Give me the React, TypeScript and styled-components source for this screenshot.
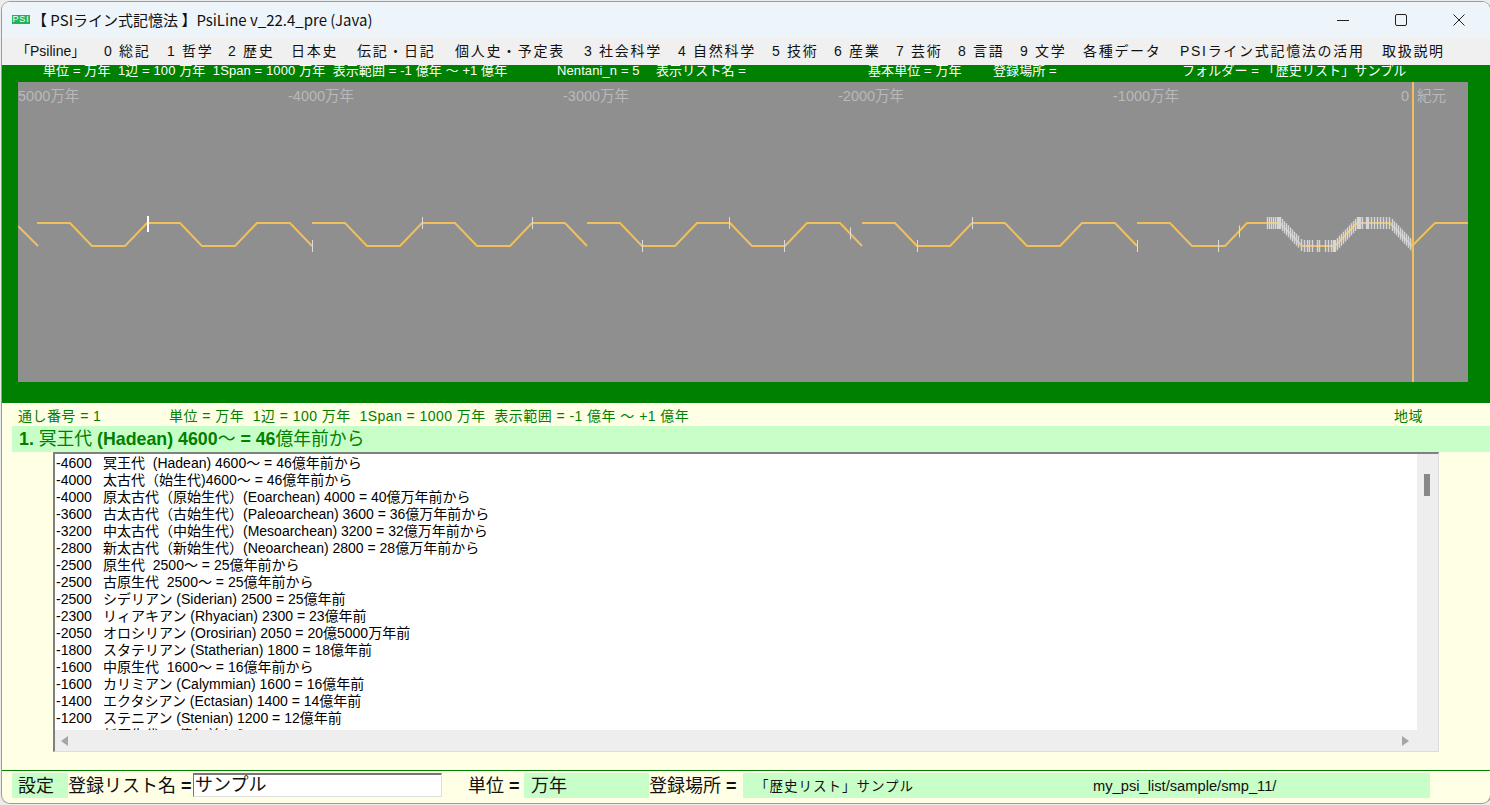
import React from "react";
import styled, { createGlobalStyle } from "styled-components";

const UI_FONT = `"Liberation Sans", "Noto Sans CJK JP", sans-serif`;
const GREEN = "#008000";
const PALE = "#c8ffc8";
const CREAM = "#ffffe6";
const ORANGE = "#f0c05c";

const GlobalStyle = createGlobalStyle`
  html, body {
    margin: 0;
    height: 100%;
    overflow: hidden;
    background: #ececec;
  }
  * { box-sizing: border-box; }
`;

const Page = styled.div`
  width: 1490px;
  height: 805px;
  padding: 2px 0 2px 2px;
  font-family: ${UI_FONT};
`;

const Window = styled.div`
  height: 801px;
  display: flex;
  flex-direction: column;
  overflow: hidden;
  background: ${CREAM};
  border-radius: 8px;
  box-shadow: 0 0 0 1px #9c9c9c;
`;

const TitleBar = styled.div`
  height: 36px;
  flex: none;
  display: flex;
  align-items: center;
  padding: 0 2px 0 10px;
  background: #eef5fa;
`;

const AppIcon = styled.span`
  width: 18px;
  height: 9px;
  margin: 0 2px 2px 0;
  background: #1fb35a;
  color: #fff;
  font-size: 9px;
  letter-spacing: 0.8px;
  line-height: 9px;
  text-align: center;
  overflow: hidden;
`;

const Title = styled.div`
  flex: 1;
  margin-bottom: 2px;
  font-family: "Noto Sans CJK JP", sans-serif;
  font-size: 15px;
  color: #111;
  white-space: pre;
`;

const WindowButtons = styled.div`
  display: flex;
`;

const WindowButton = styled.div`
  width: 58px;
  height: 36px;
  display: flex;
  align-items: center;
  justify-content: center;
  svg {
    display: block;
  }
`;

const MenuBar = styled.div`
  height: 27px;
  flex: none;
  display: flex;
  align-items: center;
  padding: 0 0 3px 14px;
  background: #f0f0f0;
`;

const MenuItem = styled.div<{ $w: number; $latin?: boolean }>`
  width: ${(p) => p.$w}px;
  flex: none;
  font-size: 14px;
  letter-spacing: ${(p) => (p.$latin ? 0 : 1.7)}px;
  color: #111;
  white-space: nowrap;
`;

const GreenPanel = styled.div`
  height: 338px;
  flex: none;
  background: ${GREEN};
  padding: 0 22px 21px 16px;
  display: flex;
  flex-direction: column;
`;

const StatusRow = styled.div`
  height: 17px;
  flex: none;
  display: grid;
  grid-template-columns: 514px 99px 212px 125px 189px 1fr;
  padding-left: 25px;
  overflow: hidden;
  color: #fff;
  font-size: 13px;
  letter-spacing: 0.1px;
  line-height: 12px;
  white-space: pre;
`;

const ChartSvg = styled.svg`
  display: block;
  width: 1450px;
  height: 300px;
  background: #8f8f8f;
`;

const AxisText = styled.text`
  fill: #b9b9b9;
  font-family: ${UI_FONT};
  font-size: 14.5px;
`;

const InfoRow = styled.div`
  height: 23px;
  flex: none;
  display: grid;
  grid-template-columns: 151px 1225px 1fr;
  align-items: center;
  padding: 0 0 0 16px;
  color: ${GREEN};
  font-size: 14px;
  letter-spacing: 0.45px;
  white-space: pre;
`;

const Heading = styled.div`
  height: 26px;
  flex: none;
  margin-left: 10px;
  padding-left: 7px;
  background: ${PALE};
  color: ${GREEN};
  font-size: 17.8px;
  line-height: 26px;
  white-space: pre;
  b {
    font-weight: 700;
  }
`;

const ListBox = styled.div`
  width: 1386px;
  height: 300px;
  flex: none;
  margin-left: 51px;
  display: grid;
  grid-template-columns: 1fr 21px;
  grid-template-rows: 1fr 21px;
  border-top: 2px solid #808080;
  border-left: 2px solid #808080;
  border-right: 1px solid #dcdcdc;
  border-bottom: 1px solid #dcdcdc;
  background: #fff;
`;

const ListRows = styled.div`
  overflow: hidden;
  padding: 1px 0 0 1px;
`;

const ListRow = styled.div`
  height: 17px;
  display: flex;
  font-size: 14px;
  line-height: 17px;
  color: #000;
  white-space: pre;
`;

const Year = styled.span`
  width: 47px;
  flex: none;
`;

const VScroll = styled.div`
  background: #eeeeee;
  padding: 20px 0 0 7px;
`;

const Thumb = styled.div`
  width: 6px;
  height: 22px;
  background: #888;
`;

const HScroll = styled.div`
  grid-column: 1 / 3;
  background: #eeeeee;
  display: flex;
  align-items: center;
  justify-content: space-between;
  padding: 0 29px 0 6px;
`;

const Arrow = styled.span<{ $right?: boolean }>`
  width: 0;
  height: 0;
  border-top: 5px solid transparent;
  border-bottom: 5px solid transparent;
  ${(p) =>
    p.$right
      ? "border-left: 7px solid #a5a5a5;"
      : "border-right: 7px solid #a5a5a5;"}
`;

const FootRow = styled.div`
  margin-top: 18px;
  height: 31px;
  flex: none;
  border-top: 1px solid ${GREEN};
  padding: 2px 0 0 10px;
  display: flex;
  font-size: 18px;
  line-height: 27px;
  color: #111;
  white-space: pre;
`;

const FootLabel = styled.div<{ $w: number; $pad?: number }>`
  width: ${(p) => p.$w}px;
  height: 25px;
  flex: none;
  padding-left: ${(p) => p.$pad ?? 0}px;
`;

const FootValue = styled(FootLabel)`
  background: ${PALE};
`;

const Eq = styled.b`
  font-weight: 700;
`;

const NameInput = styled.div`
  width: 249px;
  height: 24px;
  flex: none;
  padding-left: 1px;
  background: #fff;
  line-height: 20px;
  border-top: 2px solid #777;
  border-left: 1px solid #777;
  border-right: 1px solid #ddd;
  border-bottom: 1px solid #ddd;
`;

const PlaceBox = styled.div`
  width: 687px;
  height: 25px;
  flex: none;
  display: grid;
  grid-template-columns: 338px 1fr;
  padding-left: 12px;
  background: ${PALE};
  font-size: 14.7px;
  line-height: 27px;
`;

const PlaceName = styled.span`
  font-size: 13.5px;
  letter-spacing: 1px;
`;

const MENU: [string, number][] = [
  ["「Psiline」", 88],
  ["0 総記", 63],
  ["1 哲学", 61],
  ["2 歴史", 63],
  ["日本史", 66],
  ["伝記・日記", 98],
  ["個人史・予定表", 129],
  ["3 社会科学", 94],
  ["4 自然科学", 94],
  ["5 技術", 62],
  ["6 産業", 62],
  ["7 芸術", 62],
  ["8 言語", 62],
  ["9 文学", 63],
  ["各種データ", 97],
  ["PSIライン式記憶法の活用", 202],
  ["取扱説明", 80],
];

const ROWS: [string, string][] = [
  ["-4600", "冥王代  (Hadean) 4600～ = 46億年前から"],
  ["-4000", "太古代（始生代)4600～ = 46億年前から"],
  ["-4000", "原太古代（原始生代）(Eoarchean) 4000 = 40億万年前から"],
  ["-3600", "古太古代（古始生代）(Paleoarchean) 3600 = 36億万年前から"],
  ["-3200", "中太古代（中始生代）(Mesoarchean) 3200 = 32億万年前から"],
  ["-2800", "新太古代（新始生代）(Neoarchean) 2800 = 28億万年前から"],
  ["-2500", "原生代  2500～ = 25億年前から"],
  ["-2500", "古原生代  2500～ = 25億年前から"],
  ["-2500", "シデリアン (Siderian) 2500 = 25億年前"],
  ["-2300", "リィアキアン (Rhyacian) 2300 = 23億年前"],
  ["-2050", "オロシリアン (Orosirian) 2050 = 20億5000万年前"],
  ["-1800", "スタテリアン (Statherian) 1800 = 18億年前"],
  ["-1600", "中原生代  1600～ = 16億年前から"],
  ["-1600", "カリミアン (Calymmian) 1600 = 16億年前"],
  ["-1400", "エクタシアン (Ectasian) 1400 = 14億年前"],
  ["-1200", "ステニアン (Stenian) 1200 = 12億年前"],
  ["-1000", "新原生代 10億年前から"],
];

const HIGH = 223;
const LOW = 246;

const waveY = (x: number) => {
  const s = 37 + 275 * Math.floor((x - 37.01) / 275);
  const p = (x - s) % 110;
  if (p < 33) return HIGH;
  if (p < 55) return HIGH + ((p - 33) / 22) * (LOW - HIGH);
  if (p < 88) return LOW;
  return LOW - ((p - 88) / 22) * (LOW - HIGH);
};

const segment = (s: number) =>
  `M${s} ${HIGH}H${s + 33}L${s + 55} ${LOW}H${s + 88}L${s + 110} ${HIGH}H${s + 143}L${s + 165} ${LOW}H${s + 198}L${s + 220} ${HIGH}H${s + 253}L${s + 275} ${LOW}`;

const WAVE =
  `M18 226L38 ${LOW}` +
  [37, 312, 587, 862, 1137].map(segment).join("") +
  `M1412 ${LOW}L1435 ${HIGH}H1468`;

const SPARSE = [312, 422, 532, 642, 729, 784, 850, 917, 972, 1137, 1218, 1239];

const range = (from: number, to: number, step: number) => {
  const out: number[] = [];
  for (let x = from; x <= to; x += step) out.push(x);
  return out;
};

const DENSE = [
  1267, 1269, 1271, 1273, 1275, 1277, 1278, 1279, 1280,
  ...range(1282, 1299, 2),
  1301, 1304, 1307, 1309, 1312, 1317, 1319, 1325, 1328, 1331, 1333, 1334, 1335,
  ...range(1337, 1355, 2),
  1357, 1358, 1359, 1360, 1362, 1366, 1367, 1368, 1371, 1374, 1377, 1380, 1383, 1386, 1389,
  ...range(1392, 1412, 2),
];

const AXIS: [string, number][] = [
  ["5000万年", 18],
  ["-4000万年", 288],
  ["-3000万年", 563],
  ["-2000万年", 838],
  ["-1000万年", 1113],
  ["0", 1401],
  ["紀元", 1417],
];

const Chart = () => (
  <ChartSvg viewBox="18 82 1450 300">
    {AXIS.map(([label, x]) => (
      <AxisText key={label} x={x} y={101}>
        {label}
      </AxisText>
    ))}
    <path d={WAVE} fill="none" stroke={ORANGE} strokeWidth={2} />
    {SPARSE.map((x) => (
      <line
        key={x}
        x1={x + 0.5}
        x2={x + 0.5}
        y1={waveY(x) - 6}
        y2={waveY(x) + 6}
        stroke="#dcdcdc"
        strokeWidth={1}
      />
    ))}
    {DENSE.map((x, i) => (
      <line
        key={i}
        x1={x + 0.5}
        x2={x + 0.5}
        y1={waveY(x) - 6}
        y2={waveY(x) + 6}
        stroke="#d6d6d6"
        strokeWidth={1.4}
      />
    ))}
    <line x1={148} x2={148} y1={216} y2={232} stroke="#fff" strokeWidth={2} />
    <line x1={1413} x2={1413} y1={82} y2={382} stroke={ORANGE} strokeWidth={2} />
  </ChartSvg>
);

export default function App() {
  return (
    <Page>
      <GlobalStyle />
      <Window>
        <TitleBar>
          <AppIcon>PSI</AppIcon>
          <Title>【 PSIライン式記憶法 】PsiLine v_22.4_pre (Java)</Title>
          <WindowButtons>
            <WindowButton>
              <svg width="12" height="12" viewBox="0 0 12 12">
                <path d="M0 6.5H12" stroke="#222" strokeWidth="1" />
              </svg>
            </WindowButton>
            <WindowButton>
              <svg width="12" height="12" viewBox="0 0 12 12">
                <rect x="0.5" y="0.5" width="11" height="11" rx="1.5" fill="none" stroke="#222" strokeWidth="1" />
              </svg>
            </WindowButton>
            <WindowButton>
              <svg width="12" height="12" viewBox="0 0 12 12">
                <path d="M0.5 0.5L11.5 11.5M11.5 0.5L0.5 11.5" stroke="#222" strokeWidth="1" />
              </svg>
            </WindowButton>
          </WindowButtons>
        </TitleBar>
        <MenuBar>
          {MENU.map(([label, w], i) => (
            <MenuItem key={label} $w={w} $latin={i === 0}>
              {label}
            </MenuItem>
          ))}
        </MenuBar>
        <GreenPanel>
          <StatusRow>
            <span>単位 = 万年  1辺 = 100 万年  1Span = 1000 万年  表示範囲 = -1 億年 ～ +1 億年</span>
            <span>Nentani_n = 5</span>
            <span>表示リスト名 =</span>
            <span>基本単位 = 万年</span>
            <span>登録場所 =</span>
            <span>フォルダー = 「歴史リスト」サンプル</span>
          </StatusRow>
          <Chart />
        </GreenPanel>
        <InfoRow>
          <span>通し番号 = 1</span>
          <span>単位 = 万年  1辺 = 100 万年  1Span = 1000 万年  表示範囲 = -1 億年 ～ +1 億年</span>
          <span>地域</span>
        </InfoRow>
        <Heading>
          <b>1. </b>冥王代 <b>(Hadean) 4600</b>～ <b>= 46</b>億年前から
        </Heading>
        <ListBox>
          <ListRows>
            {ROWS.map(([year, text], i) => (
              <ListRow key={i}>
                <Year>{year}</Year>
                <span>{text}</span>
              </ListRow>
            ))}
          </ListRows>
          <VScroll>
            <Thumb />
          </VScroll>
          <HScroll>
            <Arrow />
            <Arrow $right />
          </HScroll>
        </ListBox>
        <FootRow>
          <FootValue $w={56} $pad={6}>設定</FootValue>
          <FootLabel $w={125}>登録リスト名 <Eq>=</Eq></FootLabel>
          <NameInput>サンプル</NameInput>
          <FootLabel $w={82} $pad={26}>単位 <Eq>=</Eq></FootLabel>
          <FootValue $w={125} $pad={7}>万年</FootValue>
          <FootLabel $w={94}>登録場所 <Eq>=</Eq></FootLabel>
          <PlaceBox>
            <PlaceName>「歴史リスト」サンプル</PlaceName>
            <span>my_psi_list/sample/smp_11/</span>
          </PlaceBox>
        </FootRow>
      </Window>
    </Page>
  );
}
